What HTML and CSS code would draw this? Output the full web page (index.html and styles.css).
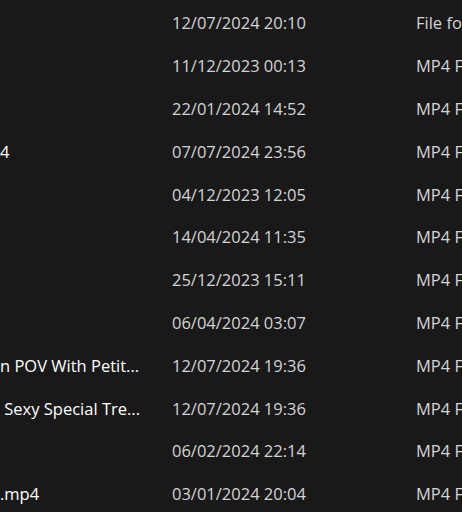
FILE: index.html
```html
<!DOCTYPE html>
<html lang="en">
<head>
<meta charset="utf-8">
<title>Files</title>
<link rel="stylesheet" href="styles.css">
</head>
<body>
<div class="list">
  <div class="row"><span class="name"></span><span class="date">12/07/2024 20:10</span><span class="type">File folder</span></div>
  <div class="row"><span class="name"></span><span class="date">11/12/2023 00:13</span><span class="type">MP4 File</span></div>
  <div class="row"><span class="name"></span><span class="date">22/01/2024 14:52</span><span class="type">MP4 File</span></div>
  <div class="row"><span class="name">4</span><span class="date">07/07/2024 23:56</span><span class="type">MP4 File</span></div>
  <div class="row"><span class="name"></span><span class="date">04/12/2023 12:05</span><span class="type">MP4 File</span></div>
  <div class="row"><span class="name"></span><span class="date">14/04/2024 11:35</span><span class="type">MP4 File</span></div>
  <div class="row"><span class="name"></span><span class="date">25/12/2023 15:11</span><span class="type">MP4 File</span></div>
  <div class="row"><span class="name"></span><span class="date">06/04/2024 03:07</span><span class="type">MP4 File</span></div>
  <div class="row"><span class="name">n POV With Petit...</span><span class="date">12/07/2024 19:36</span><span class="type">MP4 File</span></div>
  <div class="row"><span class="name"> Sexy Special Tre...</span><span class="date">12/07/2024 19:36</span><span class="type">MP4 File</span></div>
  <div class="row"><span class="name"></span><span class="date">06/02/2024 22:14</span><span class="type">MP4 File</span></div>
  <div class="row"><span class="name">.mp4</span><span class="date">03/01/2024 20:04</span><span class="type">MP4 File</span></div>
</div>
</body>
</html>
```
FILE: styles.css
```css
html, body {
  margin: 0;
  padding: 0;
  background: #191919;
  overflow: hidden;
  width: 462px;
  height: 512px;
}
.list {
  padding-top: 1.6px;
  font-family: "Open Sans", "Noto Sans", sans-serif;
  font-size: 16.5px;
}
.row {
  display: grid;
  grid-template-columns: 172px 244px 200px;
  height: 42.8px;
  align-items: center;
  white-space: pre;
}
.name {
  color: #ffffff;
  overflow: hidden;
  width: 160px;
}
.date {
  color: #d4d4d4;
}
.type {
  color: #d4d4d4;
  overflow: hidden;
}
```
